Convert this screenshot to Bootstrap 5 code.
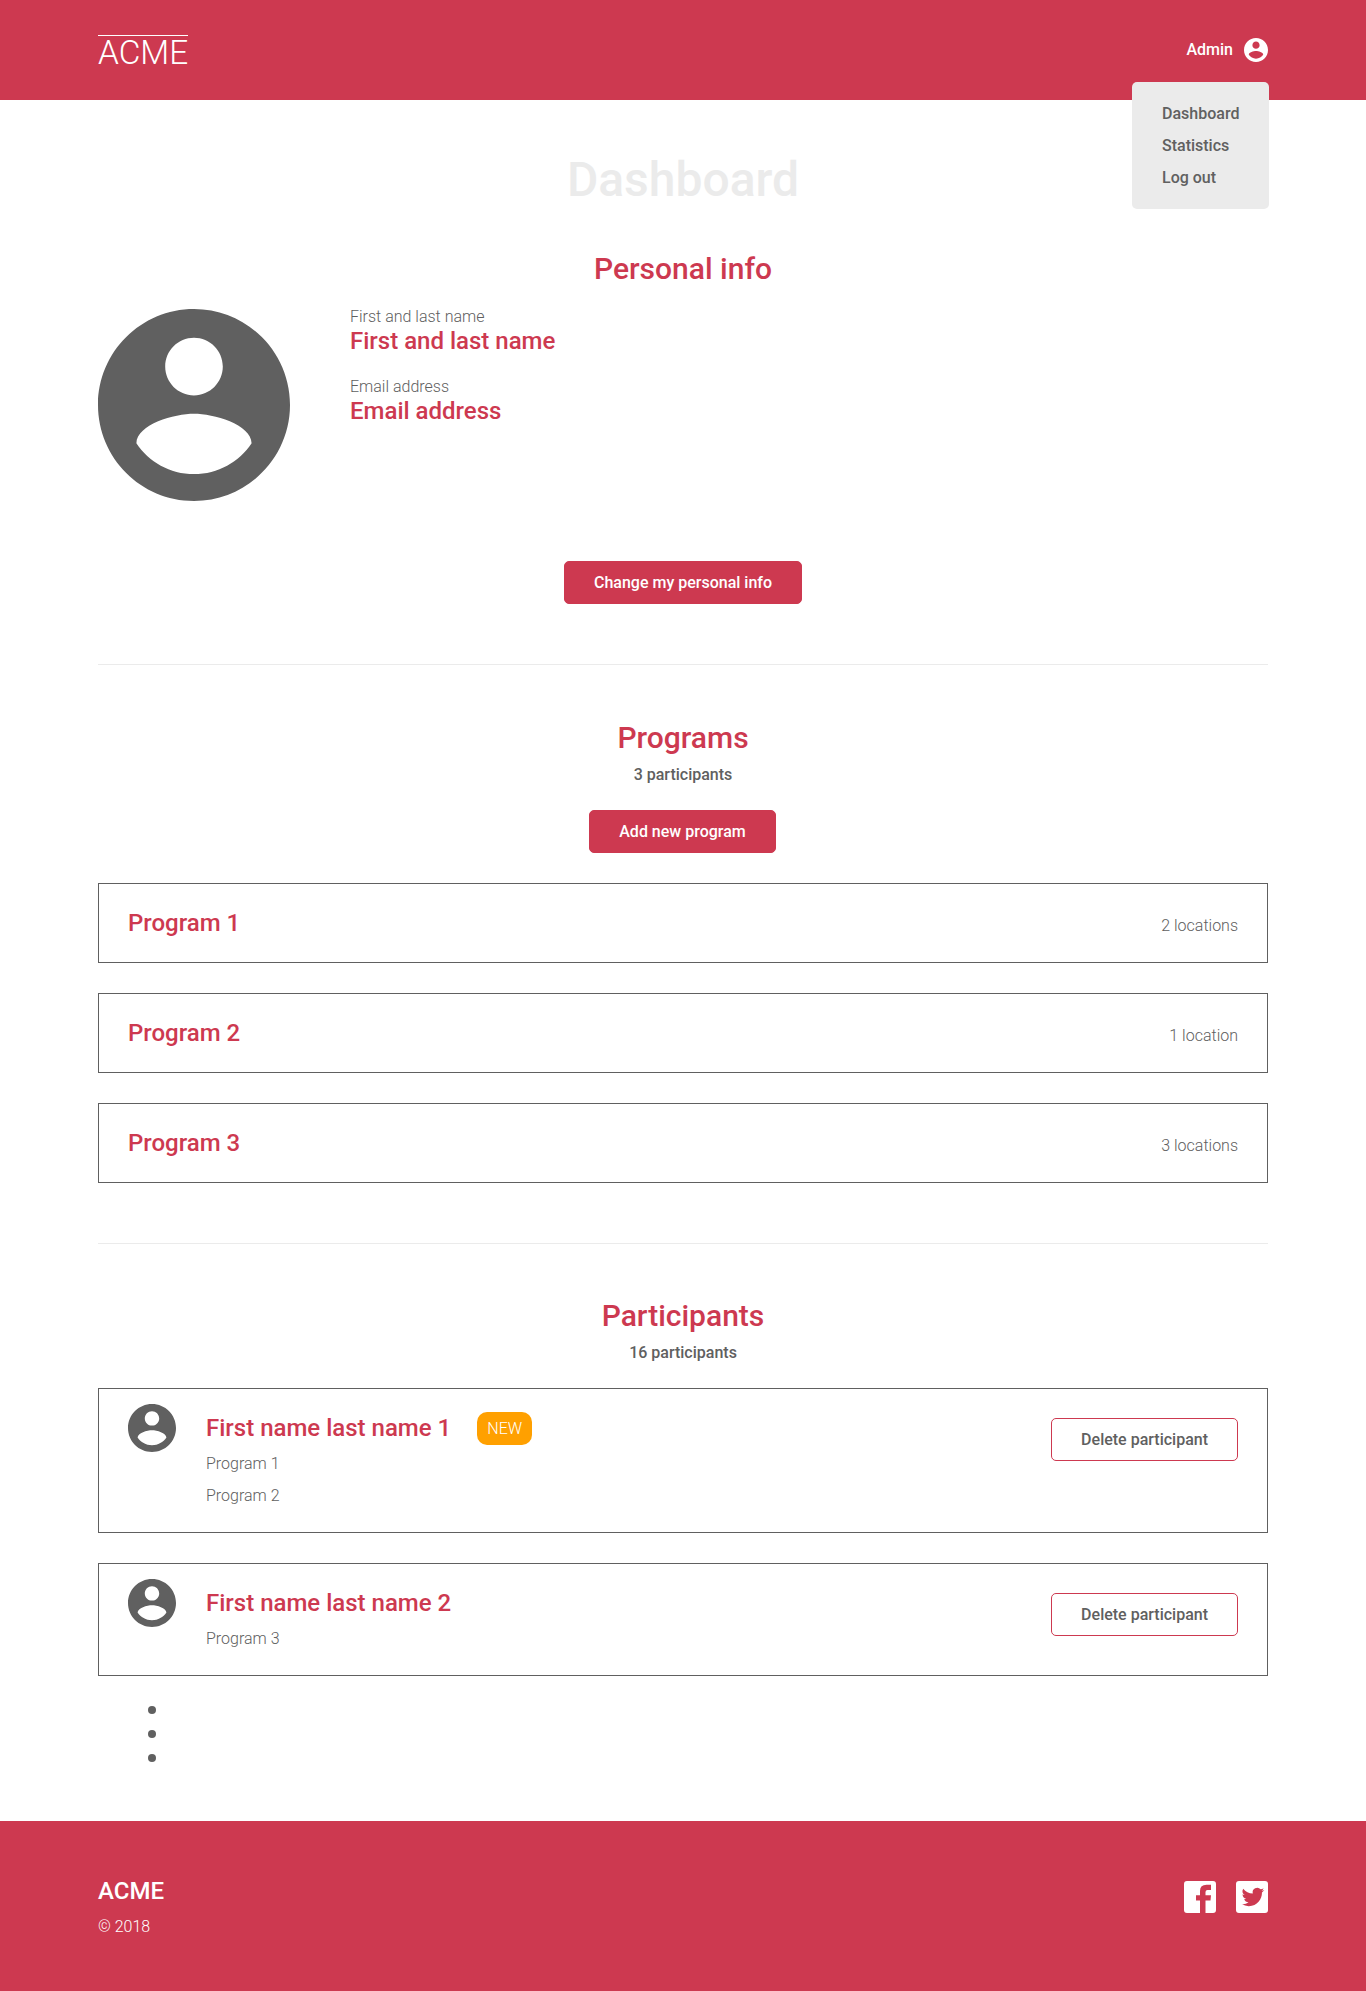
<!DOCTYPE html>
<html lang="en">
<head>
<meta charset="utf-8">
<meta name="viewport" content="width=device-width, initial-scale=1">
<title>ACME – Dashboard</title>
<link href="https://cdn.jsdelivr.net/npm/bootstrap@5.3.0/dist/css/bootstrap.min.css" rel="stylesheet">
<style>
  :root { --brand: #cd3950; --ink: #606060; --pale: #ebebeb; }
  body { font-family: Roboto, sans-serif; font-weight: 300; font-size: 16px; line-height: 24px; color: var(--ink); background: #fff; }
  svg { display: block; fill: currentColor; flex: none; }
  .wrap { width: 1170px; margin: 0 auto; }
  .bg-brand { background: var(--brand); color: #fff; }
  .text-mid { font-weight: 500; }
  .site-header { height: 100px; }
  .logo { font-size: 33.4px; line-height: 33px; border-top: 1px solid #fff; margin-top: 5px; width: 90px; height: 35px; white-space: nowrap; color: #fff; }
  .user-link { gap: 11px; color: #fff; }
  .user-menu { position: absolute; top: 82px; right: -1px; width: 137px; height: 127px; padding: 16px 30px 15px; border-radius: 5px; background: var(--pale); }
  .user-menu a { display: block; color: var(--ink); line-height: 32px; font-weight: 500; text-decoration: none; white-space: nowrap; }
  .page-title { font-size: 48px; line-height: 48px; font-weight: 500; color: var(--pale); margin: 56px 0 50px; }
  .section-title { font-size: 30px; line-height: 30px; font-weight: 500; color: var(--brand); margin: 0; }
  .item-title { font-size: 24px; line-height: 24px; font-weight: 500; color: var(--brand); margin: 0; white-space: nowrap; }
  .section-line { height: 1px; background: var(--pale); margin-top: 60px; }
  .btn-acme { --bs-btn-font-weight: 500; height: 43px; padding: 0 29px; border-radius: 5px; font-size: 16px; line-height: 41px; border: 1px solid var(--brand); }
  .btn-solid, .btn-solid:hover { background: var(--brand); color: #fff; }
  .btn-line, .btn-line:hover { background: #fff; color: var(--ink); }
  .btn-add { width: 187px; margin: 23px 1px 30px 0; }
  .personal { gap: 60px; margin: 25px 0 60px; }
  .fields { margin: -4px 0 0; }
  .fields dt { font-weight: 300; height: 24px; }
  .fields dd { margin-bottom: 22px; }
  .box { border: 1px solid var(--ink); padding: 0 29px; }
  .program { height: 80px; line-height: 24px; padding-top: 27px; }
  .stack { gap: 30px; }
  .person { gap: 30px; padding-top: 15px; height: 113px; }
  .person-tall { height: 145px; }
  .person .info { padding-top: 12px; }
  .person .item-title { margin-bottom: 8px; }
  .person .btn-acme { margin-top: 14px; }
  .person p { margin: 0; line-height: 32px; }
  .tag-new { background: #ffa000; color: #fff; border-radius: 10px; width: 55px; height: 33px; line-height: 33px; text-align: center; margin: -4px 0 -5px 26px; }
  .more { gap: 16px; margin: 29.5px 0 0 49.7px; }
  .more i { width: 8px; height: 8px; border-radius: 50%; background: var(--ink); }
  .site-footer { height: 170px; margin-top: 59.5px; padding-top: 60px; }
</style>
</head>
<body>
<svg class="d-none">
  <symbol id="user" viewBox="2 2 20 20"><path d="M12 2C6.48 2 2 6.48 2 12s4.48 10 10 10 10-4.48 10-10S17.52 2 12 2zm0 3c1.66 0 3 1.34 3 3s-1.34 3-3 3-3-1.34-3-3 1.34-3 3-3zm0 14.2c-2.5 0-4.71-1.28-6-3.22.03-1.99 4-3.08 6-3.08 1.99 0 5.97 1.09 6 3.08-1.29 1.94-3.5 3.22-6 3.22z"/></symbol>
</svg>

<header class="site-header bg-brand">
  <div class="wrap h-100 d-flex justify-content-between align-items-center position-relative">
    <a class="logo text-decoration-none" href="#">ACME</a>
    <a class="user-link text-mid d-flex align-items-center text-decoration-none" href="#">Admin
      <svg width="24" height="24"><use href="#user"/></svg></a>
    <nav class="user-menu">
      <a href="#">Dashboard</a><a href="#">Statistics</a><a href="#">Log out</a>
    </nav>
  </div>
</header>

<main class="wrap">
  <h1 class="page-title text-center">Dashboard</h1>

  <section>
    <h2 class="section-title text-center">Personal info</h2>
    <div class="personal d-flex">
      <svg width="192" height="192"><use href="#user"/></svg>
      <dl class="fields">
        <dt>First and last name</dt><dd class="item-title">First and last name</dd>
        <dt>Email address</dt><dd class="item-title">Email address</dd>
      </dl>
    </div>
    <div class="d-flex justify-content-center"><button class="btn btn-acme btn-solid">Change my personal info</button></div>
  </section>

  <div class="section-line"></div>

  <section class="d-flex flex-column">
    <h2 class="section-title text-center" style="margin-top:58px">Programs</h2>
    <div class="text-center text-mid" style="margin-top:10px">3 participants</div>
    <button class="btn btn-acme btn-solid btn-add align-self-center">Add new program</button>
    <div class="stack d-flex flex-column">
      <div class="box program d-flex justify-content-between align-items-baseline"><h3 class="item-title">Program 1</h3><span>2 locations</span></div>
      <div class="box program d-flex justify-content-between align-items-baseline"><h3 class="item-title">Program 2</h3><span>1 location</span></div>
      <div class="box program d-flex justify-content-between align-items-baseline"><h3 class="item-title">Program 3</h3><span>3 locations</span></div>
    </div>
  </section>

  <div class="section-line"></div>

  <section>
    <h2 class="section-title text-center" style="margin-top:57px">Participants</h2>
    <div class="text-center text-mid" style="margin:10px 0 23px">16 participants</div>
    <div class="stack d-flex flex-column">
      <article class="box person person-tall d-flex align-items-start">
        <svg width="48" height="48"><use href="#user"/></svg>
        <div class="info flex-grow-1">
          <div class="d-flex align-items-start"><h3 class="item-title">First name last name 1</h3><span class="tag-new">NEW</span></div>
          <p>Program 1</p><p>Program 2</p>
        </div>
        <button class="btn btn-acme btn-line">Delete participant</button>
      </article>
      <article class="box person d-flex align-items-start">
        <svg width="48" height="48"><use href="#user"/></svg>
        <div class="info flex-grow-1">
          <h3 class="item-title">First name last name 2</h3>
          <p>Program 3</p>
        </div>
        <button class="btn btn-acme btn-line">Delete participant</button>
      </article>
    </div>
    <div class="more d-flex flex-column"><i></i><i></i><i></i></div>
  </section>
</main>

<footer class="site-footer bg-brand">
  <div class="wrap d-flex justify-content-between align-items-start">
    <div>
      <div class="item-title text-white" style="margin-top:-2px">ACME</div>
      <div style="margin-top:12px">© 2018</div>
    </div>
    <div class="d-flex" style="gap:20px">
      <svg width="32" height="32" viewBox="0 0 32 32"><path fill-rule="evenodd" d="M3 0h26a3 3 0 0 1 3 3v26a3 3 0 0 1-3 3h-7.500V19.500h5L27 14.200h-5.500V11q0-2 2-2H27V3.700h-4.500Q16 3.700 16 10v4.200h-4v5.300h4V32H3a3 3 0 0 1-3-3V3a3 3 0 0 1 3-3z"/></svg>
      <svg width="32" height="32" viewBox="0 0 32 32"><rect width="32" height="32" rx="3"/><path fill="#cd3950" transform="translate(5.700 4.700) scale(.94)" d="M23.950 4.570a10 10 0 0 1-2.820.775 4.960 4.960 0 0 0 2.160-2.720c-.95.555-2 .96-3.130 1.180a4.920 4.920 0 0 0-8.380 4.480C7.690 8.090 4.070 6.130 1.640 3.160a4.920 4.920 0 0 0 1.520 6.570 4.900 4.900 0 0 1-2.230-.61v.06a4.920 4.920 0 0 0 3.950 4.830 5 5 0 0 1-2.210.08 4.940 4.940 0 0 0 4.600 3.420A9.870 9.870 0 0 1 0 19.540a13.990 13.990 0 0 0 7.550 2.210c9.050 0 14-7.500 14-13.980 0-.21 0-.42-.015-.63a9.940 9.940 0 0 0 2.460-2.550z"/></svg>
    </div>
  </div>
</footer>
<script src="https://cdn.jsdelivr.net/npm/bootstrap@5.3.0/dist/js/bootstrap.bundle.min.js"></script>
</body>
</html>
